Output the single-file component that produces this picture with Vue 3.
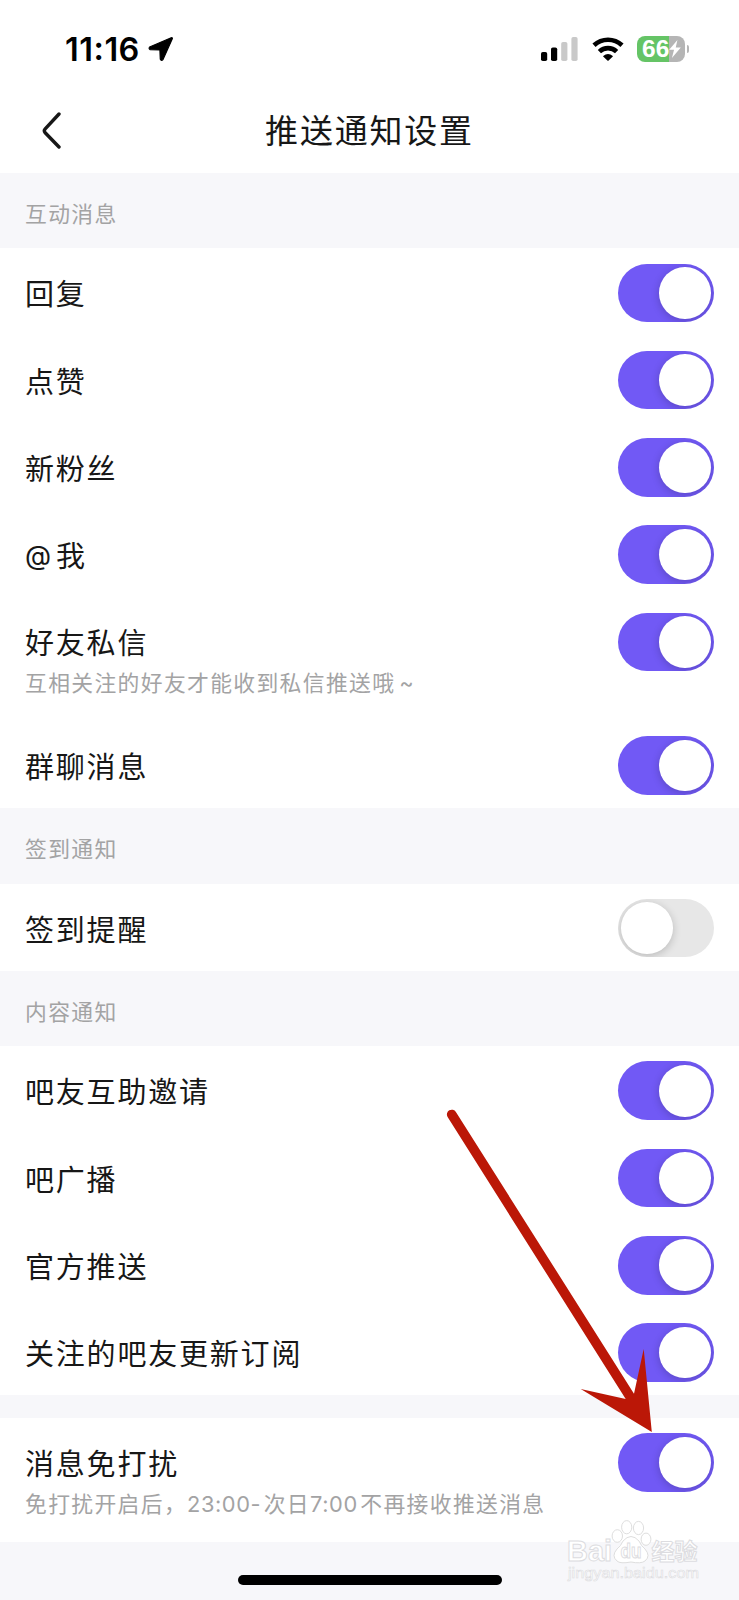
<script setup>
import { reactive } from 'vue'

const groups = reactive([
  {
    title: '互动消息',
    rows: [
      { label: '回复', on: true },
      { label: '点赞', on: true },
      { label: '新粉丝', on: true },
      { label: '@我', on: true },
      { label: '好友私信', on: true, note: '互相关注的好友才能收到私信推送哦~' },
      { label: '群聊消息', on: true },
    ],
  },
  { title: '签到通知', rows: [{ label: '签到提醒', on: false }] },
  {
    title: '内容通知',
    rows: [
      { label: '吧友互助邀请', on: true },
      { label: '吧广播', on: true },
      { label: '官方推送', on: true },
      { label: '关注的吧友更新订阅', on: true },
    ],
  },
  {
    title: '',
    rows: [{ label: '消息免打扰', on: true, note: '免打扰开启后，23:00-次日7:00不再接收推送消息' }],
  },
])

// Splits mixed text into Latin and Chinese runs so each gets its own tracking.
const runs = (text) =>
  text.match(/[\x21-\x7e]+|[^\x21-\x7e]+/g).map((value) => ({
    value,
    kind: value === '@' ? 'at' : value === '~' ? 'tilde' : /^[\x21-\x7e]/.test(value) ? 'latin' : 'han',
  }))
</script>

<template>
  <div class="screen">
    <header class="top">
      <div class="status">
        <span class="time">11<b>:</b>16</span>
        <svg class="location" width="26" height="26" viewBox="0 0 26 26">
          <path d="M23.2 1.8 L1.6 11 Q0.4 12.8 2.2 13.6 L11.9 13.9 L12.3 23.2 Q13.4 25.2 15 23.6 L24.4 2.6 Q24.4 1.4 23.2 1.8Z" fill="#000" stroke="#000" stroke-width="1.2" stroke-linejoin="round" />
        </svg>
        <div class="indicators">
          <svg class="signal" width="37" height="25" viewBox="0 0 37 25">
            <rect x="0" y="15" width="6.2" height="9" rx="1.8" fill="#000" />
            <rect x="10" y="10.5" width="6.2" height="13.5" rx="1.8" fill="#000" />
            <rect x="20.2" y="5" width="6.2" height="19" rx="1.8" fill="#c9c9c9" />
            <rect x="30.4" y="0" width="6.2" height="24" rx="1.8" fill="#c9c9c9" />
          </svg>
          <svg class="wifi" width="32" height="25" viewBox="0 0 32 25">
            <g fill="none" stroke="#000" stroke-width="4.6">
              <path d="M2 8.2 A20.6 20.6 0 0 1 30 8.2" />
              <path d="M7.4 14.6 A12.4 12.4 0 0 1 24.6 14.6" />
            </g>
            <path d="M11.2 18.9 Q16 15.1 20.8 18.9 Q20.9 19.6 20.3 20.1 L16.6 23.5 Q16 24 15.4 23.5 L11.7 20.1 Q11.1 19.6 11.2 18.9Z" />
          </svg>
          <div class="battery">
            <span class="level">66</span>
            <svg class="bolt" width="12" height="18" viewBox="0 0 11 17">
              <path d="M7.8 0 L0 9.3 H4.6 L2.6 17 L11 7 H6.2Z" fill="#fff" />
            </svg>
          </div>
          <span class="battery-tip"></span>
        </div>
      </div>
      <nav class="nav">
        <svg class="back" width="20" height="38" viewBox="0 0 20 38">
          <path d="M17 2 L3.2 16.8 Q1.4 18.8 3.2 20.8 L17 35" fill="none" stroke="#171717" stroke-width="3.4" stroke-linecap="round" />
        </svg>
        <h1>推送通知设置</h1>
      </nav>
    </header>

    <section v-for="(group, g) in groups" :key="g">
      <h2 v-if="group.title">{{ group.title }}</h2>
      <div v-else class="gap"></div>
      <div v-for="row in group.rows" :key="row.label" class="row" :class="{ tall: row.note }">
        <div class="text">
          <div class="label"><span v-for="(run, i) in runs(row.label)" :key="i" :class="run.kind">{{ run.value }}</span></div>
          <div v-if="row.note" class="note"><span v-for="(run, i) in runs(row.note)" :key="i" :class="run.kind">{{ run.value }}</span></div>
        </div>
        <div class="switch" :class="{ on: row.on }" @click="row.on = !row.on"><i></i></div>
      </div>
    </section>

    <footer class="bottom"><span class="home"></span></footer>

    <svg class="arrow" width="220" height="330" viewBox="440 1105 220 330">
      <path d="M447.6 1117 A4.8 4.8 0 0 1 455.9 1112 L634 1393.7 L643.7 1349 L651.8 1432 L580.7 1389 L625.7 1399Z" fill="#bb1707" />
    </svg>

    <svg class="watermark" width="150" height="70" viewBox="0 0 150 70">
      <g fill="#fff" stroke="#dedede" stroke-width="1">
        <ellipse cx="17.3" cy="21" rx="5.2" ry="6.3" />
        <ellipse cx="26.7" cy="12.2" rx="5.1" ry="6.6" />
        <ellipse cx="38.5" cy="13" rx="5.1" ry="6.6" />
        <ellipse cx="46" cy="24.2" rx="4.9" ry="6.1" />
        <path d="M23 26 Q31 17 39 26 Q41 31 45 34 Q51 41 45 46 Q41 49 31 47 Q20 49 17 46 Q11 41 17 34 Q21 31 23 26Z" />
      </g>
      <g class="mark-text">
        <text x="-33" y="46" font-size="30" textLength="45" lengthAdjust="spacingAndGlyphs">Bai</text>
        <text x="20.5" y="43" font-size="21" textLength="21" lengthAdjust="spacingAndGlyphs">du</text>
        <text class="cn" x="51.5" y="45" font-size="23" textLength="46" lengthAdjust="spacingAndGlyphs">经验</text>
        <text class="site" x="-32" y="63" font-size="15.5" textLength="131" lengthAdjust="spacingAndGlyphs">jingyan.baidu.com</text>
      </g>
    </svg>
  </div>
</template>

<style>
body {
  margin: 0;
}
</style>

<style scoped>
.screen {
  position: relative;
  width: 739px;
  height: 1600px;
  overflow: hidden;
  background: #f7f7fa;
  color: #171717;
  font-family: Inter, "Noto Sans CJK SC", sans-serif;
}
.top {
  height: 173px;
  background: #fff;
}
.status {
  display: flex;
  height: 97px;
  box-sizing: border-box;
  padding: 36px 50px 0 65px;
}
.time {
  width: 83px;
  font-size: 32.5px;
  font-weight: 600;
  line-height: 27px;
  letter-spacing: 0.5px;
  color: #000;
  white-space: nowrap;
}
.time b {
  position: relative;
  top: -1px;
  font-weight: 600;
}
.indicators {
  display: flex;
  margin-left: auto;
  height: 26px;
}
.signal {
  margin: 1px 14px 0 0;
}
.wifi {
  margin: 1px 13px 0 0;
}
.battery {
  display: flex;
  align-items: center;
  width: 48px;
  height: 26px;
  box-sizing: border-box;
  padding-left: 5px;
  border-radius: 8px;
  background: linear-gradient(90deg, #65c466 0 32px, #b5b5b5 32px);
}
.level {
  font: bold 24.5px/26px "Liberation Sans", sans-serif;
  color: #fff;
}
.battery-tip {
  width: 2px;
  height: 8px;
  margin: 9px 0 0 2px;
  border-radius: 0 3px 3px 0;
  background: #b5b5b5;
}
.nav {
  display: grid;
  grid-template-columns: 60px 1fr 60px;
  align-items: center;
  height: 68px;
}
.back {
  margin-left: 42px;
}
h1 {
  margin: 0;
  font-size: 33px;
  font-weight: 400;
  line-height: 48px;
  letter-spacing: 1.8px;
  text-align: center;
}
h2 {
  margin: 0;
  height: 75.4px;
  box-sizing: border-box;
  padding: 24px 25px 0;
  font-size: 21.8px;
  font-weight: 400;
  line-height: 34px;
  letter-spacing: 1.35px;
  color: #a3a3a4;
}
.gap {
  height: 22.8px;
}
.row {
  display: flex;
  justify-content: space-between;
  height: 87.25px;
  box-sizing: border-box;
  padding: 15.2px 24.8px 0 25px;
  background: #fff;
}
.row.tall {
  height: 123.6px;
}
.label {
  margin-top: 9.8px;
  height: 44px;
  font-size: 29px;
  line-height: 44px;
  letter-spacing: 1.8px;
}
.note {
  font-size: 21.8px;
  font-weight: 400;
  line-height: 34px;
  letter-spacing: 1.35px;
  color: #a3a3a4;
  white-space: nowrap;
}
.at {
  position: relative;
  top: -2px;
  margin-right: 3px;
  font-size: 27px;
}
.latin {
  margin-right: 2.5px;
  letter-spacing: 0.6px;
}
.tilde {
  margin-left: 4px;
}
.switch {
  display: flex;
  flex: none;
  width: 96.6px;
  height: 58.6px;
  box-sizing: border-box;
  padding: 3.5px;
  border-radius: 30px;
  overflow: hidden;
  background: #e7e7e7;
}
.switch.on {
  justify-content: flex-end;
  background: #7159f5;
}
.switch i {
  width: 51.6px;
  height: 51.6px;
  border-radius: 50%;
  background: #fff;
  box-shadow: 0 2px 9px rgba(0, 0, 0, 0.2);
}
.bottom {
  display: flex;
  justify-content: center;
  padding-top: 33px;
}
.home {
  width: 264px;
  height: 10px;
  border-radius: 5px;
  background: #000;
}
.arrow {
  position: absolute;
  left: 440px;
  top: 1105px;
}
.watermark {
  position: absolute;
  left: 600px;
  top: 1515px;
  overflow: visible;
}
.mark-text {
  font-family: "Liberation Sans", sans-serif;
  font-weight: 700;
  fill: #fff;
  stroke: #dcdce0;
  stroke-width: 1px;
}
.cn {
  font-family: "Noto Sans CJK SC", sans-serif;
}
.site {
  font-weight: 400;
  stroke-width: 0.6px;
}
</style>
